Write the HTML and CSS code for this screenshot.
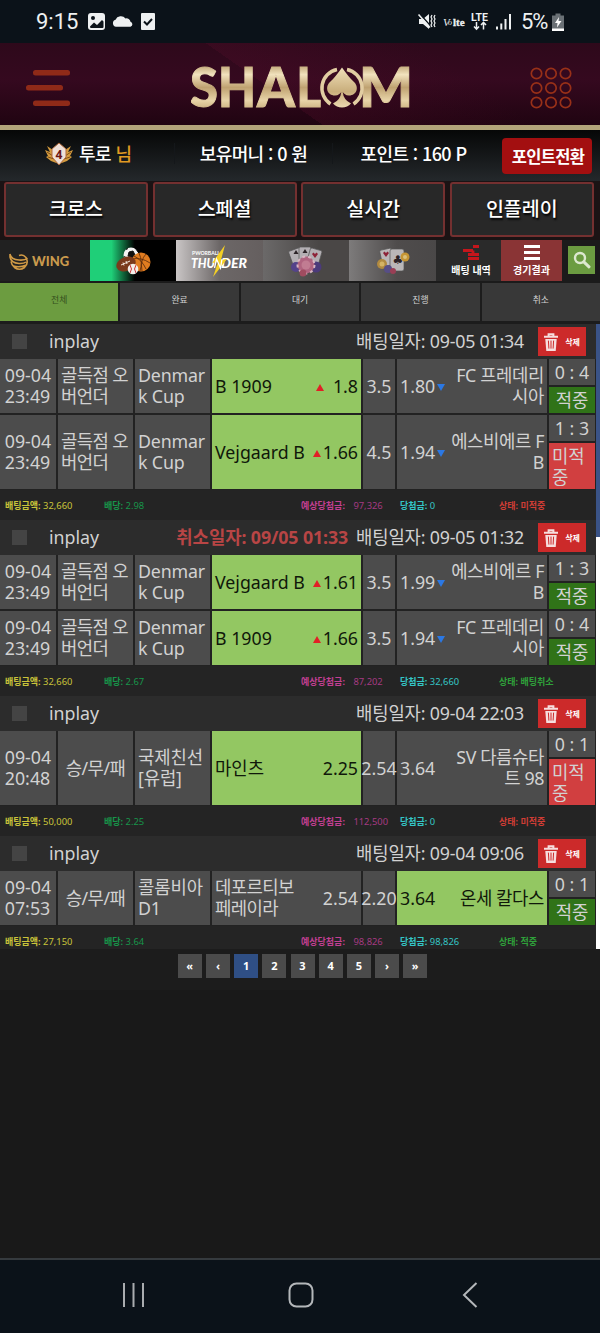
FILE: index.html
```
<!DOCTYPE html>
<html lang="ko">
<head>
    <meta charset="utf-8">
    <title>SHALOM</title>
    <link rel="stylesheet" href="styles.css">
</head>
<body>

    <!-- shared icons -->
    <svg class="defs" width="0" height="0">
        <symbol id="trash" viewBox="0 0 14 18">
            <path d="M0 3.800h14M4.600 3.500V1.200h4.800v2.300" fill="none" stroke="#f6dede" stroke-width="2"/>
            <path d="M1.300 6h11.400l-1 12H2.300z" fill="#f6dede"/>
            <path d="M4.400 7.600l.5 8M7 7.600v8M9.600 7.600l-.5 8" stroke="#cc2a2a" stroke-width="1"/>
        </symbol>
    </svg>

    <div class="status">
        <span class="clock">9:15</span>
        <svg width="68" height="20" viewBox="0 0 68 20">
            <rect x="0" y="1" width="17" height="17" rx="3" fill="#eef0f1"/>
            <circle cx="5" cy="6" r="2" fill="#0b1219"/>
            <path d="M2 14.500l4-4 3 2.500 5-5 1.500 1.500v5.500q0 1-1 1h-11.500q-1 0-1-1.500z" fill="#0b1219"/>
            <path d="M29 14.800a3.600 3.600 0 0 1-.5-7 5.800 5.800 0 0 1 10-1.300 4 4 0 0 1 5 3.300 2.600 2.600 0 0 1 0 5z" transform="translate(-1 0)" fill="#eef0f1"/>
            <rect x="53" y="1" width="14" height="17" rx="1" fill="#eef0f1"/>
            <path d="M56 9.500l3 3 5-5.500" fill="none" stroke="#0b1219" stroke-width="2"/>
        </svg>
        <svg class="right" width="95" height="20" viewBox="0 0 95 20">
            <path d="M1 7h4l6-5v15l-6-5H1z" fill="#eef0f1"/>
            <path d="M2 2l11 12.500" stroke="#0b1219" stroke-width="1.500"/>
            <path d="M.5 2.500l11.500 13" stroke="#eef0f1" stroke-width="1.600"/>
            <path d="M14 3l-1 2 1 2-1 2 1 2-1 2 1 2M17 3l-1 2 1 2-1 2 1 2-1 2 1 2" fill="none" stroke="#eef0f1" stroke-width="1.200"/>
            <text x="25" y="14" class="volte-v">V</text>
            <text x="30" y="13" class="volte-o">o</text>
            <text x="35" y="14" class="volte">lte</text>
            <text x="53" y="9" class="lte">LTE</text>
            <path d="M58.500 10v7M56 14.500l2.500 2.700 2.500-2.700M65.500 17.500v-7M63 13l2.500-2.700L68 13" fill="none" stroke="#eef0f1" stroke-width="1.500"/>
            <path d="M79 17.500v-3M83.300 17.500v-6M87.500 17.500V7M92 17.500V2" stroke="#eef0f1" stroke-width="2"/>
        </svg>
        <span class="percent">5%</span>
        <svg width="12" height="18" viewBox="0 0 12 18">
            <path d="M3.500 2.500V.5h5v2H12V18H0V2.500z" fill="#6a7075"/>
            <path d="M0 15.500h12V18H0z" fill="#fff"/>
            <path d="M7 4L3 10h2.500l-.500 4.500L9.500 8H6.500z" fill="#fff"/>
        </svg>
    </div>

    <div class="header">
        <svg class="menu" width="46" height="40" viewBox="0 0 46 40">
            <g fill="#8f2a18">
                <rect x="8" y="2" width="37" height="5.500" rx="2.500"/>
                <rect x="1" y="17" width="37" height="5.500" rx="2.500"/>
                <rect x="8" y="32.500" width="37" height="5.500" rx="2.500"/>
            </g>
        </svg>
        <svg class="logo" width="222" height="76" viewBox="0 0 222 76">
            <defs>
                <linearGradient id="gold" x1="0" y1="16" x2="0" y2="59" gradientUnits="userSpaceOnUse">
                    <stop offset="0" stop-color="#c4ab7c"/>
                    <stop offset=".2" stop-color="#f1e2bd"/>
                    <stop offset=".5" stop-color="#bfa271"/>
                    <stop offset=".8" stop-color="#e8d4a8"/>
                    <stop offset="1" stop-color="#cdb382"/>
                </linearGradient>
            </defs>
            <g fill="url(#gold)" stroke="url(#gold)">
                <text y="57" x="-1" class="logo-text" textLength="28" lengthAdjust="spacingAndGlyphs">S</text>
                <text y="57" x="27" class="logo-text" textLength="38" lengthAdjust="spacingAndGlyphs">H</text>
                <text y="57" x="66" class="logo-text" textLength="38" lengthAdjust="spacingAndGlyphs">A</text>
                <text y="57" x="105.500" class="logo-text" textLength="24.500" lengthAdjust="spacingAndGlyphs">L</text>
                <text y="57" x="168" class="logo-text" textLength="54" lengthAdjust="spacingAndGlyphs">M</text>
            </g>
            <g transform="translate(-1 13)">
                <path fill="url(#spade)" d="M152 4.500q-7 10-11.500 14c-6 5-3.500 14 4.500 14 3.500 0 5-2 6.300-3.500q-.8 8-8.300 11.500 3.500 4 9 4t9-4q-7.500-3.500-8.300-11.500c1.300 1.500 2.800 3.500 6.300 3.500 8 0 10.500-9 4.500-14Q159 14.500 152 4.500z"/>
                <path d="M147 6.500a19 19 0 0 0-6.500 34.500M157 6.500a19 19 0 0 1 6.500 34.500" fill="none" stroke="#e2cda2" stroke-width="3.500"/>
            </g>
            <defs>
                <linearGradient id="spade" x1="0" y1="0" x2="0" y2="1">
                    <stop offset="0" stop-color="#efdfb9"/>
                    <stop offset=".6" stop-color="#c9ae7c"/>
                    <stop offset="1" stop-color="#ead8b0"/>
                </linearGradient>
            </defs>
        </svg>
        <svg class="dots" width="42" height="42" viewBox="0 0 42 42">
            <g fill="none" stroke="#983018" stroke-width="1.700">
                <circle cx="6.500" cy="6.500" r="5.200"/><circle cx="21" cy="6.500" r="5.200"/><circle cx="35.500" cy="6.500" r="5.200"/>
                <circle cx="6.500" cy="21" r="5.200"/><circle cx="21" cy="21" r="5.200"/><circle cx="35.500" cy="21" r="5.200"/>
                <circle cx="6.500" cy="35.500" r="5.200"/><circle cx="21" cy="35.500" r="5.200"/><circle cx="35.500" cy="35.500" r="5.200"/>
            </g>
        </svg>
    </div>

    <div class="info">
        <div class="user">
            <svg width="28" height="24" viewBox="0 0 28 24">
                <path d="M0 8l5 2-3-6 6 4 6-6 6 6 6-4-3 6 5-2-3 6 2 1-5 4-8 3-8-3-5-4 2-1z" fill="#d49b3e"/>
                <path d="M2 10l6 4M3 15l6 2M26 10l-6 4M25 15l-6 2" stroke="#7d4c16" stroke-width="1"/>
                <path d="M14 1l7 6v8l-7 8-7-8V7z" fill="#efe0d8" stroke="#b06a3c" stroke-width="1"/>
                <text x="10.500" y="16.500" class="rank">4</text>
            </svg>
            <span>투로 <b>님</b></span>
        </div>
        <div class="money">보유머니 : 0 원</div>
        <div class="point">포인트 : 160 P</div>
        <button class="change">포인트전환</button>
    </div>

    <div class="menus">
        <a>크로스</a>
        <a>스페셜</a>
        <a>실시간</a>
        <a>인플레이</a>
    </div>

    <div class="games">
        <div class="wing">
            <svg width="20" height="20" viewBox="0 0 20 20" fill="none" stroke="#d09a45" stroke-width="1.600">
                <path d="M1 2q1 5.500 9 6 6 .5 8.500-2M1 2v3q1 6 9 6.500 5 .2 7-1.500M10 3.500q4-1.500 7 2 3 6-1.500 10-5 3.500-10 0-3-2.500-3.500-6M4.500 14q6 2 13-1"/>
            </svg>
            <span>WING</span>
        </div>
        <div class="sports">
            <svg width="36" height="28" viewBox="0 0 36 28">
                <circle cx="16" cy="8" r="7.500" fill="#f4f4f4"/>
                <path d="M14 5l4-1 2 4-3 3-4-2zM11 2.500l2-1M21 2l2 3M9.500 9l1 2" fill="#111" stroke="#111"/>
                <circle cx="26" cy="15" r="9.500" fill="#e07c20"/>
                <path d="M17 12q9-2 18 4M24 6q4 9 1 18M31 7q-6 6-4 17M19 9q8 4 12 13" fill="none" stroke="#55280b" stroke-width=".8"/>
                <ellipse cx="11" cy="17" rx="10" ry="7" transform="rotate(-22 11 17)" fill="#7a3a1c"/>
                <path d="M6 18l9-4M8 15.500l1 3M11 14l1 3" stroke="#f2e6dc" stroke-width="1"/>
                <circle cx="18" cy="22" r="5.300" fill="#f2eee9"/>
                <path d="M15 18q3 4 0 8M21 18q-3 4 0 8" fill="none" stroke="#c33" stroke-width="1"/>
            </svg>
        </div>
        <div class="thunder">
            <svg width="58" height="34" viewBox="0 0 58 34">
                <text x="1" y="10.500" class="th-small" textLength="28" lengthAdjust="spacingAndGlyphs">PWORBALL</text>
                <text x="0" y="24" class="th-big" textLength="24" lengthAdjust="spacingAndGlyphs">THU</text>
                <text x="30" y="24" class="th-big" textLength="26" lengthAdjust="spacingAndGlyphs">DER</text>
                <path d="M34 1L21 19l6-1-5 15 14-18-6 1z" fill="#f4cf24"/>
                <path d="M23.500 24l2-9 4 9 1.500-9" fill="none" stroke="#fff" stroke-width="1.300"/>
            </svg>
        </div>
        <div class="cards">
            <svg width="36" height="32" viewBox="0 0 36 32">
                <g fill="#b3afb3" stroke="#555" stroke-width=".7">
                    <rect x="3" y="4" width="12" height="17" rx="1.500" transform="rotate(-20 9 13)"/>
                    <rect x="11" y="2" width="12" height="17" rx="1.500"/>
                    <rect x="20" y="4" width="12" height="17" rx="1.500" transform="rotate(16 26 13)"/>
                </g>
                <path d="M8 5l2.500 4h-5zM17 4l2.500 4h-5z" fill="#2b2327"/>
                <path d="M27 13l-3-4 1.500-1.500L27 9l1.500-1.500L30 9z" fill="#8d2338"/>
                <circle cx="8" cy="22" r="5" fill="#54438a"/><circle cx="28" cy="22" r="5.500" fill="#4b3a7a"/>
                <circle cx="18" cy="20" r="8.500" fill="#b06480" stroke="#d8b6c2" stroke-width="2" stroke-dasharray="3 3"/>
                <circle cx="18" cy="20" r="4.500" fill="#c17c92"/>
                <circle cx="15" cy="28" r="3.500" fill="#a04c60"/>
            </svg>
        </div>
        <div class="cards second">
            <svg width="36" height="28" viewBox="0 0 36 28">
                <g fill="#bab7b8" stroke="#555" stroke-width=".7">
                    <rect x="6" y="2" width="12" height="17" rx="1.500" transform="rotate(-12 12 10)"/>
                    <rect x="15" y="2" width="14" height="22" rx="2"/>
                </g>
                <path d="M11 10l-3-4 1.500-1.500L11 6l1.500-1.500L14 6z" fill="#8d2338"/>
                <text x="17.500" y="17" class="suit">♣</text>
                <circle cx="7" cy="17" r="5" fill="#b18a40"/><circle cx="7" cy="17" r="2.500" fill="#d4b465"/>
                <circle cx="30" cy="10" r="4.500" fill="#c69534"/><circle cx="30" cy="10" r="2" fill="#dcc17a"/>
                <circle cx="13" cy="22" r="4" fill="#574e86"/><circle cx="18" cy="24" r="3" fill="#993f55"/>
            </svg>
        </div>
        <div class="history">
            <svg width="18" height="15" viewBox="0 0 18 15">
                <path d="M11 1.500h6M1 5.500h10M11 5.500v4M6 9.500h11M6 13.500h11" stroke="#c5161c" stroke-width="2.800"/>
            </svg>
            <span>배팅 내역</span>
        </div>
        <div class="result">
            <svg width="16" height="15" viewBox="0 0 16 15">
                <path d="M0 1.500h16M0 7.500h16M0 13.500h16" stroke="#fff" stroke-width="2.800"/>
            </svg>
            <span>경기결과</span>
        </div>
        <div class="search">
            <svg width="18" height="18" viewBox="0 0 18 18">
                <circle cx="7" cy="7" r="5" fill="none" stroke="#dce8cf" stroke-width="2.400"/>
                <path d="M10.800 10.800l5.200 5" stroke="#dce8cf" stroke-width="3" stroke-linecap="round"/>
            </svg>
        </div>
    </div>

    <div class="tabs">
        <div class="on">전체</div>
        <div>완료</div>
        <div>대기</div>
        <div>진행</div>
        <div>취소</div>
    </div>

    <div class="list">
        <div class="bets">
            <div class="head">
                <i class="check"></i><span class="kind">inplay</span>
                <span class="date">배팅일자: 09-05 01:34</span>
                <button class="del"><svg width="14" height="18"><use href="#trash"/></svg>삭제</button>
            </div>
            <div class="row">
                <div class="time">09-04<br>23:49</div>
                <div class="type">골득점 오<br>버언더</div>
                <div class="league">Denmar<br>k Cup</div>
                <div class="home pick"><span>B 1909</span><span><i class="up far"></i>1.8</span></div>
                <div class="mid">3.5</div>
                <div class="away"><span>1.80<i class="down"></i></span><span>FC 프레데리<br>시아</span></div>
                <div class="score"><p>0 : 4</p><p class="win">적중</p></div>
            </div>
            <div class="row tall">
                <div class="time">09-04<br>23:49</div>
                <div class="type">골득점 오<br>버언더</div>
                <div class="league">Denmar<br>k Cup</div>
                <div class="home pick"><span>Vejgaard B</span><span><i class="up"></i>1.66</span></div>
                <div class="mid">4.5</div>
                <div class="away"><span>1.94<i class="down"></i></span><span>에스비에르 F<br>B</span></div>
                <div class="score"><p>1 : 3</p><p class="lose">미적<br>중</p></div>
            </div>
            <div class="foot">
                <span class="yellow"><b>배팅금액:</b> 32,660</span>
                <span class="green"><b>배당:</b> 2.98</span>
                <span class="pink"><b>예상당첨금:</b> <em>97,326</em></span>
                <span class="cyan"><b>당첨금:</b> 0</span>
                <span class="red"><b>상태: 미적중</b></span>
            </div>

            <div class="head">
                <i class="check"></i><span class="kind">inplay</span>
                <span class="cancel">취소일자: 09/05 01:33</span>
                <span class="date">배팅일자: 09-05 01:32</span>
                <button class="del"><svg width="14" height="18"><use href="#trash"/></svg>삭제</button>
            </div>
            <div class="row">
                <div class="time">09-04<br>23:49</div>
                <div class="type">골득점 오<br>버언더</div>
                <div class="league">Denmar<br>k Cup</div>
                <div class="home pick"><span>Vejgaard B</span><span><i class="up"></i>1.61</span></div>
                <div class="mid">3.5</div>
                <div class="away"><span>1.99<i class="down"></i></span><span>에스비에르 F<br>B</span></div>
                <div class="score"><p>1 : 3</p><p class="win">적중</p></div>
            </div>
            <div class="row">
                <div class="time">09-04<br>23:49</div>
                <div class="type">골득점 오<br>버언더</div>
                <div class="league">Denmar<br>k Cup</div>
                <div class="home pick"><span>B 1909</span><span><i class="up"></i>1.66</span></div>
                <div class="mid">3.5</div>
                <div class="away"><span>1.94<i class="down"></i></span><span>FC 프레데리<br>시아</span></div>
                <div class="score"><p>0 : 4</p><p class="win">적중</p></div>
            </div>
            <div class="foot">
                <span class="yellow"><b>배팅금액:</b> 32,660</span>
                <span class="green"><b>배당:</b> 2.67</span>
                <span class="pink"><b>예상당첨금:</b> <em>87,202</em></span>
                <span class="cyan"><b>당첨금:</b> 32,660</span>
                <span class="lime"><b>상태: 배팅취소</b></span>
            </div>

            <div class="head">
                <i class="check"></i><span class="kind">inplay</span>
                <span class="date">배팅일자: 09-04 22:03</span>
                <button class="del"><svg width="14" height="18"><use href="#trash"/></svg>삭제</button>
            </div>
            <div class="row tall">
                <div class="time">09-04<br>20:48</div>
                <div class="type one">승/무/패</div>
                <div class="league">국제친선<br>[유럽]</div>
                <div class="home pick"><span>마인츠</span><span>2.25</span></div>
                <div class="mid">2.54</div>
                <div class="away"><span>3.64</span><span>SV 다름슈타<br>트 98</span></div>
                <div class="score"><p>0 : 1</p><p class="lose">미적<br>중</p></div>
            </div>
            <div class="foot">
                <span class="yellow"><b>배팅금액:</b> 50,000</span>
                <span class="green"><b>배당:</b> 2.25</span>
                <span class="pink"><b>예상당첨금:</b> <em>112,500</em></span>
                <span class="cyan"><b>당첨금:</b> 0</span>
                <span class="red"><b>상태: 미적중</b></span>
            </div>

            <div class="head">
                <i class="check"></i><span class="kind">inplay</span>
                <span class="date">배팅일자: 09-04 09:06</span>
                <button class="del"><svg width="14" height="18"><use href="#trash"/></svg>삭제</button>
            </div>
            <div class="row">
                <div class="time">09-04<br>07:53</div>
                <div class="type one">승/무/패</div>
                <div class="league">콜롬비아<br>D1</div>
                <div class="home"><span class="ko">데포르티보<br>페레이라</span><span>2.54</span></div>
                <div class="mid">2.20</div>
                <div class="away pick"><span>3.64</span><span>온세 칼다스</span></div>
                <div class="score"><p>0 : 1</p><p class="win">적중</p></div>
            </div>
            <div class="foot">
                <span class="yellow"><b>배팅금액:</b> 27,150</span>
                <span class="green"><b>배당:</b> 3.64</span>
                <span class="pink"><b>예상당첨금:</b> <em>98,826</em></span>
                <span class="cyan"><b>당첨금:</b> 98,826</span>
                <span class="lime"><b>상태: 적중</b></span>
            </div>
        </div>
        <div class="scroll"><div class="thumb"></div></div>
    </div>

    <div class="pages">
        <a>«</a><a>‹</a><a class="on">1</a><a>2</a><a>3</a><a>4</a><a>5</a><a>›</a><a>»</a>
    </div>

    <div class="nav">
        <svg width="24" height="26" viewBox="0 0 24 26"><path d="M3 1v24M12.500 1v24M22 1v24" stroke="#a9acaf" stroke-width="2"/></svg>
        <svg class="home-key" width="26" height="26" viewBox="0 0 26 26"><rect x="1.500" y="1.500" width="23" height="23" rx="7" fill="none" stroke="#b4b7ba" stroke-width="2"/></svg>
        <svg width="16" height="26" viewBox="0 0 16 26"><path d="M14.500 1L2 13l12.500 12" fill="none" stroke="#b4b7ba" stroke-width="2"/></svg>
    </div>

</body>
</html>
```
FILE: styles.css
```
* {
    box-sizing: border-box;
}

body {
    margin: 0;
    width: 600px;
    height: 1333px;
    overflow: hidden;
    display: flex;
    flex-direction: column;
    background: #191919;
    color: #d2d2d2;
    font-family: "Noto Sans", "Noto Sans CJK KR", sans-serif;
    font-size: 17.8px;
    line-height: 21px;
}

body > div {
    flex-shrink: 0;
}

button {
    border: 0;
    padding: 0;
    font-family: inherit;
}

i, em {
    font-style: normal;
}

.defs {
    position: absolute;
}

/* phone status bar */
.status {
    height: 43px;
    display: flex;
    align-items: center;
    padding-left: 36px;
    padding-right: 36px;
    background: #0b1219;
    color: #eef0f1;
    font-family: Roboto, sans-serif;
}
.clock {
    width: 52px;
    font-size: 22px;
}
.status .right {
    margin-left: auto;
    margin-right: 8px;
    overflow: visible;
}
.percent {
    font-size: 22px;
    letter-spacing: -1.200px;
    width: 31px;
}
.volte-v { font: italic 11px "Liberation Serif", serif; fill: #eef0f1; }
.volte-o { font: italic 8px "Liberation Serif", serif; fill: #eef0f1; }
.volte { font: bold 11px "Liberation Serif", serif; fill: #eef0f1; stroke: #eef0f1; stroke-width: .3px; }
.lte { font: bold 10.500px Roboto, sans-serif; fill: #eef0f1; }

.header {
    height: 87px;
    display: flex;
    justify-content: space-between;
    align-items: center;
    padding: 8px 28px 0 25px;
    border-bottom: 5px solid #b3a57a;
    background: linear-gradient(35deg, transparent 45%, rgba(90, 15, 45, .25) 45%, transparent 75%), linear-gradient(#2e091b, #35091f 45%, #200411);
}
.logo {
    margin-left: 2px;
}
.logo-text {
    font: 900 55px Lato, sans-serif;
    stroke-width: 1px;
}

.info {
    height: 51px;
    display: grid;
    grid-template-columns: 174px 158px 159px 109px;
    align-items: center;
    text-align: center;
    background: linear-gradient(#060707, #24282b);
    color: #fff;
    font-family: "Noto Sans CJK KR", sans-serif;
    font-weight: 500;
    font-size: 18px;
    letter-spacing: -.6px;
    padding-bottom: 4px;
}
.user {
    display: flex;
    align-items: center;
    gap: 6px;
    padding-left: 45px;
}
.user b {
    color: #e09b22;
    font-weight: 500;
}
.rank {
    font: bold 12px "Noto Sans", sans-serif;
    fill: #6b1512;
}
.money, .point {
    border-left: 1px solid #14171a;
}
.point {
    padding-left: 3px;
}
.change {
    width: 90px;
    height: 36px;
    margin-left: 11px;
    margin-top: 4px;
    padding-left: 2px;
    border-radius: 4px;
    background: #a30f10;
    color: #fff;
    font-weight: 700;
    font-size: 16.500px;
    letter-spacing: -.7px;
}

.menus {
    height: 59px;
    display: grid;
    grid-template-columns: repeat(4, 144px);
    gap: 4.600px;
    padding: 1px 4px 3px;
    background: #1b1314;
}
.menus a {
    display: flex;
    align-items: center;
    justify-content: center;
    border: 2px solid #743030;
    border-radius: 3px;
    background: #282828;
    color: #fff;
    font-family: "Noto Sans CJK KR", sans-serif;
    font-weight: 500;
    font-size: 19.500px;
    padding-bottom: 5px;
    text-shadow: 1px 2px 2px #000;
}

.games {
    height: 43px;
    display: grid;
    grid-template-columns: 90px 86px 87px 86px 87px 65px 61px 38px;
    padding-bottom: 2px;
    background: #1b1b1b;
    font-weight: bold;
}
.games > div {
    display: flex;
    align-items: center;
    justify-content: center;
}
.games > .wing {
    justify-content: flex-start;
    padding-left: 9px;
    gap: 3px;
    background: #212121;
    color: #c99a4d;
    font-family: Lato, sans-serif;
    font-weight: 900;
    font-size: 13px;
    padding-top: 2px;
}
.sports { background: linear-gradient(90deg, #1fcf78 25%, #000 52%); }
.thunder { background: linear-gradient(90deg, #c9c5c5, #6c6767 50%, #655f5f); }
.th-small { font: bold 5px Lato, sans-serif; fill: #fff; }
.th-big { font: italic 900 13px Lato, sans-serif; fill: #fff; }
.cards { background: linear-gradient(90deg, #6b6969, #4a4746 65%); }
.cards.second { background: linear-gradient(90deg, #7d7b7b, #4f4c4c 55%, #4a4848); }
.suit { font: 12px "DejaVu Sans", sans-serif; fill: #2b2327; }
.history, .result {
    flex-direction: column;
    gap: 2px;
    color: #fff;
    font-family: "Noto Sans CJK KR", sans-serif;
    font-size: 10px;
    line-height: 15px;
}
.history { background: #2a2a2a; padding-left: 5px; }
.result { background: #8a3435; }
.games .search {
    width: 27px;
    height: 28px;
    margin: 6px 0 0 6px;
    background: #6b9c41;
}

.tabs {
    height: 41px;
    display: grid;
    grid-template-columns: repeat(5, 1fr);
    gap: 2px;
    padding-bottom: 3px;
    background: #1c1c1c;
    font-size: 8.800px;
}
.tabs div {
    display: flex;
    align-items: center;
    justify-content: center;
    padding-bottom: 3px;
    background: #383838;
}
.tabs .on {
    background: #6c9c40;
    color: #35501d;
}

/* betting list */
.list {
    height: 625px;
    display: flex;
    overflow: hidden;
}
.bets {
    width: 596px;
}
.scroll {
    flex: 1;
    background: #fff;
}
.thumb {
    height: 213px;
    background: #3a5387;
}

.head {
    height: 35px;
    display: flex;
    align-items: center;
    padding: 0 10px 0 12px;
    background: #2c2c2c;
}
.check {
    width: 15px;
    height: 15px;
    margin-right: 22px;
    background: #444;
}
.date {
    margin-left: auto;
    margin-right: 14px;
    letter-spacing: -.2px;
}
.cancel {
    margin-left: auto;
    margin-right: 8px;
    color: #b84545;
    font-weight: bold;
    letter-spacing: -.1px;
}
.cancel + .date {
    margin-left: 0;
}
.del {
    width: 48px;
    height: 29px;
    display: flex;
    align-items: center;
    justify-content: center;
    gap: 7px;
    background: #cc2a2a;
    color: #fff;
    font-size: 8px;
    font-weight: bold;
}

.row {
    height: 56px;
    display: grid;
    grid-template-columns: 56px 75px 75px 149px 32px 150px 46px;
    gap: 2px;
    padding-bottom: 2px;
    background: #222;
    white-space: nowrap;
}
.row.tall {
    height: 76px;
}
.row > div {
    display: flex;
    align-items: center;
    background: #4c4c4c;
}
.time, .mid, .type.one {
    justify-content: center;
}
.type, .league, .home, .away {
    padding: 0 3px;
}
.type, .ko {
    letter-spacing: -.6px;
}
.league {
    letter-spacing: -.15px;
}
.home, .away {
    justify-content: space-between;
}
.away span:last-child {
    text-align: right;
    letter-spacing: -.4px;
}
.row > .pick {
    background: #93c762;
    color: #10180a;
}

/* odds arrows */
.up, .down {
    display: inline-block;
    border-left: 4px solid transparent;
    border-right: 4px solid transparent;
    vertical-align: 2px;
}
.up { border-bottom: 7px solid #e21f26; margin-right: 2px; }
.up.far { margin-right: 9px; }
.down { border-top: 7px solid #2b78e4; margin-left: 2px; }

.row > .score {
    flex-direction: column;
    align-items: stretch;
    gap: 2px;
    background: none;
}
.score p {
    margin: 0;
    height: 26px;
    line-height: 26px;
    text-align: center;
    background: #4c4c4c;
}
.score .win {
    flex: 1;
    background: #307318;
}
.score .lose {
    flex: 1;
    padding: 3px 0 0 3px;
    line-height: 21px;
    text-align: left;
    background: #d13f40;
}

.foot {
    height: 30px;
    margin-top: -1px;
    display: grid;
    grid-template-columns: 99px 197px 99px 99px 1fr;
    align-items: center;
    padding-left: 5px;
    background: #242424;
    font-size: 9.400px;
}
.foot + .head {
    height: 35px;
}
.foot b { font-size: 9px; }
.foot em { margin-left: 6px; }
.yellow { color: #c9c33a; }
.green { color: #17944a; }
.pink { color: #a43a82; }
.pink b { color: #c23f92; }
.cyan { color: #34c6c6; }
.red { color: #cf3d35; }
.lime { color: #2fa03a; }

.pages {
    height: 41px;
    display: flex;
    justify-content: center;
    align-items: flex-start;
    gap: 4.200px;
    padding-top: 5px;
    padding-left: 5px;
    background: #1c1c1c;
}
.pages a {
    width: 24px;
    height: 24px;
    line-height: 24px;
    text-align: center;
    background: #4b4b4b;
    color: #fff;
    font-size: 11px;
    font-weight: bold;
}
.pages .on {
    background: #2f4f85;
}

.nav {
    height: 75px;
    margin-top: auto;
    display: flex;
    justify-content: space-between;
    align-items: center;
    padding: 0 122px 4px 121px;
    border-top: 2px solid #353a3e;
    background: #0b1219;
}
.home-key {
    margin-right: 6px;
}
```
